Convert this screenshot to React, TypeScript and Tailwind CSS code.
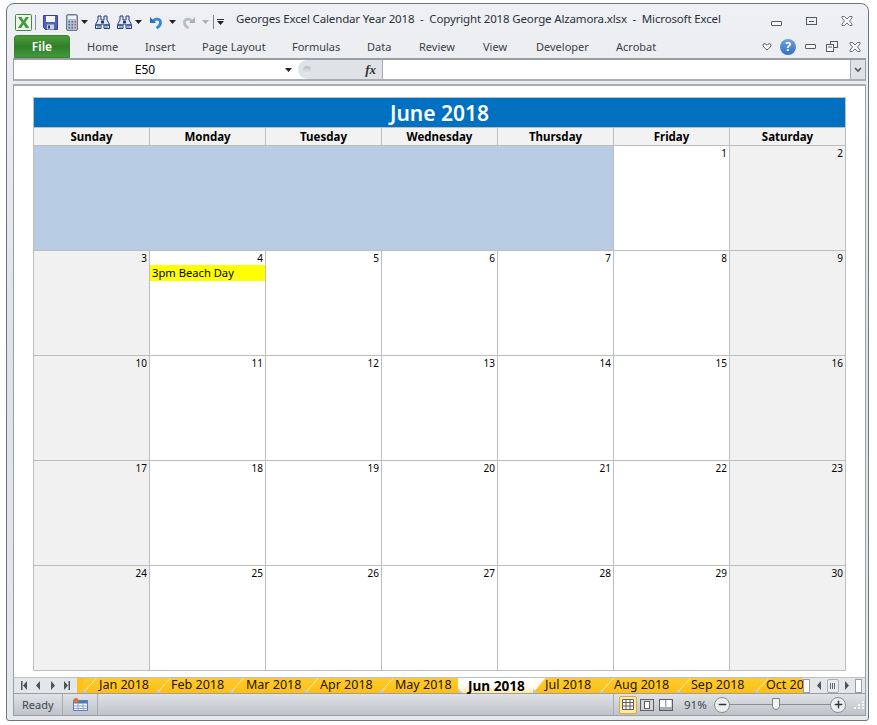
import React from "react";
import { Minus, Plus } from "lucide-react";

const days = ["Sunday", "Monday", "Tuesday", "Wednesday", "Thursday", "Friday", "Saturday"];
const menu = [
  ["Home", "w-[58px]"],
  ["Insert", "w-[57px]"],
  ["Page Layout", "w-[90px]"],
  ["Formulas", "w-[75px]"],
  ["Data", "w-[52px]"],
  ["Review", "w-[64px]"],
  ["View", "w-[53px]"],
  ["Developer", "w-[80px]"],
  ["Acrobat", "w-[60px]"],
];
const sheets = [
  ["Jan 2018", "w-[74px]", "ml-0"],
  ["Feb 2018", "w-[73px]", "ml-[-2px]"],
  ["Mar 2018", "w-[75px]", "ml-0"],
  ["Apr 2018", "w-[75px]", "ml-[-1px]"],
  ["May 2018", "w-[78px]", "ml-[-1px]"],
  ["Jun 2018", "w-[75px]", "ml-0"],
  ["Jul 2018", "w-[67px]", "ml-[-4px]"],
  ["Aug 2018", "w-[77px]", "ml-[-2px]"],
  ["Sep 2018", "w-[78px]", "ml-[-2px]"],
  ["Oct 2018", "w-[48px] overflow-x-clip", "ml-[-5px]"],
];
const rows = [
  [3, 4, 5, 6, 7, 8, 9],
  [10, 11, 12, 13, 14, 15, 16],
  [17, 18, 19, 20, 21, 22, 23],
  [24, 25, 26, 27, 28, 29, 30],
];

function ExcelIcon() {
  return (
    <svg width="17" height="17" viewBox="0 0 17 17">
      <rect x="0.5" y="0.5" width="16" height="16" rx="1" fill="#f1f4e4" stroke="#3f8a4a" />
      <path d="M3 3h3.500l2.200 3.400L10.700 3H14l-3.600 5.300L14.400 14h-3.600L8.500 10.400 6.200 14H2.800l3.900-5.600z" fill="#3f9a45" />
    </svg>
  );
}

function SaveIcon() {
  return (
    <svg width="15" height="15" viewBox="0 0 15 15">
      <path d="M0.5 0.5h14v14h-12l-2-2z" fill="#4f63c4" stroke="#34448f" />
      <rect x="3" y="1" width="9" height="6" fill="#f2f4fb" />
      <rect x="4" y="9.500" width="7" height="5" fill="#d0d2da" />
      <rect x="5" y="10.500" width="2" height="3" fill="#333f70" />
    </svg>
  );
}

function CalcIcon() {
  return (
    <svg width="12" height="17" viewBox="0 0 12 17">
      <rect x="0.5" y="0.5" width="11" height="16" rx="1.500" fill="#b4bccb" stroke="#6c7690" />
      <rect x="2" y="2" width="8" height="3" fill="#eef2f8" />
      <path d="M2.500 7h1.500v1.500H2.500zM5.500 7H7v1.500H5.500zM2.500 10H4v1.500H2.500zM5.500 10H7v1.500H5.500zM2.500 13H4v1.500H2.500zM5.500 13H7v1.500H5.500z" fill="#4a6cb0" />
      <path d="M8.500 7H10v1.500H8.500zM8.500 10H10v1.500H8.500zM8.500 13H10v1.500H8.500z" fill="#c8604a" />
    </svg>
  );
}

function BinocularsIcon() {
  return (
    <svg width="15" height="14" viewBox="0 0 15 14">
      <path d="M3 1h3v4h3V1h3v4l2.500 4.500V13.500H9V9H6v4.500H0.500V9.500L3 5z" fill="#dfe8f6" stroke="#22387f" />
      <path d="M1 10h4.500M9.500 10H14" stroke="#22387f" strokeWidth="1.500" />
      <path d="M2 11h3v2H2zM10 11h3v2h-3z" fill="#8fb0e0" />
      <path d="M6 6h3v2H6z" fill="#22387f" />
    </svg>
  );
}

function Caret({ color = "#222" }: { color?: string }) {
  return (
    <svg width="7" height="4" viewBox="0 0 7 4">
      <path d="M0 0h7L3.500 4z" fill={color} />
    </svg>
  );
}

function UndoIcon() {
  return (
    <svg width="13" height="14" viewBox="0 0 13 14">
      <path d="M3 6.500C5 3 10.500 3.500 10.500 7.500c0 2.500-2 4.500-4 5.500" fill="none" stroke="#3f86d8" strokeWidth="2.800" />
      <path d="M0 2l6 6H0z" fill="#2f6cc0" />
    </svg>
  );
}

function RedoIcon() {
  return (
    <svg width="13" height="14" viewBox="0 0 13 14">
      <path d="M10 6.500C8 3 2.500 3.500 2.500 7.500c0 2.500 2 4.500 4 5.500" fill="none" stroke="#b9bfc5" strokeWidth="2.800" />
      <path d="M13 2L7 8h6z" fill="#aab0b6" />
    </svg>
  );
}

function CloseIcon() {
  return (
    <svg width="12" height="10" viewBox="0 0 12 10">
      <path d="M1 0.500h2.500L6 3l2.500-2.500H11v1.500L8.500 5 11 8v1.500H8.500L6 7 3.500 9.500H1V8l2.500-3L1 2z" fill="#f4f5f7" stroke="#6d7278" />
    </svg>
  );
}

function MinBar() {
  return <div className="h-[5px] w-[11px] rounded-[1px] border border-[#555b63] bg-[#f5f6f8]" />;
}

function RestoreIcon() {
  return (
    <svg width="12" height="11" viewBox="0 0 12 11">
      <rect x="4.500" y="0.500" width="7" height="6" fill="#eef0f3" stroke="#555b63" />
      <rect x="0.500" y="3.500" width="7" height="7" fill="#f7f8fa" stroke="#555b63" />
      <path d="M2 6h4" stroke="#555b63" />
    </svg>
  );
}

function NavArrow({ d }: { d: string }) {
  return (
    <svg width="8" height="9" viewBox="0 0 8 9">
      <path d={d} fill="#4e545c" />
    </svg>
  );
}

// slanted left edge of a sheet tab, the upper left part belongs to the tab before it
function TabSlant({ afterActive }: { afterActive: boolean }) {
  return (
    <svg width="16" height="15" viewBox="0 0 16 15" className="shrink-0">
      {afterActive && <path d="M0 0h12.500L0 15z" fill="#fffdf2" />}
      {!afterActive && <path d="M0 15L13.500 0" stroke="#ffeab0" strokeWidth="1" />}
      <path d="M0 15V10.500L4.500 15z" fill="#c3c8ce" />
    </svg>
  );
}

function SheetTab({ label, width, shift, afterActive }: { label: string; width: string; shift: string; afterActive: boolean }) {
  if (label === "Jun 2018") {
    return (
      <div className={`relative flex h-[15px] shrink-0 items-center bg-gradient-to-b from-white via-white to-[#ffe89a] pl-[10px] font-bold text-black ${width}`}>
        <svg width="5" height="5" viewBox="0 0 5 5" className="absolute bottom-0 left-0">
          <path d="M0 5V0.500L4.500 5z" fill="#c3c8ce" />
        </svg>
        <span className="whitespace-nowrap text-[13.600px] leading-none">{label}</span>
      </div>
    );
  }
  return (
    <div className={`flex h-[15px] shrink-0 items-center bg-gradient-to-b from-[#ffcb2b] to-[#ffbf10] text-[#1c1405] ${width}`}>
      <TabSlant afterActive={afterActive} />
      <span className={`whitespace-nowrap text-[12.500px] leading-none ${shift}`}>{label}</span>
    </div>
  );
}

function Cell({ n, weekend, children }: { n: number; weekend: boolean; children?: React.ReactNode }) {
  return (
    <div className={`border-l border-t border-[#bdbdbd] first:border-l-0 ${weekend ? "bg-[#f1f1f1]" : "bg-white"}`}>
      <div className="h-[14px] pr-[2px] text-right text-[10px] leading-[14px] text-black">{n}</div>
      {children}
    </div>
  );
}

export default function App() {
  return (
    <div className="h-[725px] w-[877px] overflow-hidden bg-white pl-[6px] pt-[3px] font-['Noto_Sans',sans-serif]">
      <div className="flex h-[718px] w-[863px] flex-col rounded-t-[8px] rounded-b-[3px] border border-[#70757b] bg-gradient-to-b from-[#eef0f3] via-[#dfe2e6] to-[#e6e8eb] pb-[4px] pl-[6px] pr-[2px]">
        {/* title bar */}
        <div className="flex h-[31px] shrink-0 items-center pl-[2px] pt-[5px]">
          <ExcelIcon />
          <div className="ml-[3px] h-[15px] w-px bg-[#8a9097]" />
          <div className="ml-[7px]"><SaveIcon /></div>
          <div className="ml-[8px]"><CalcIcon /></div>
          <div className="ml-[3px]"><Caret /></div>
          <div className="ml-[7px]"><BinocularsIcon /></div>
          <div className="ml-[7px]"><BinocularsIcon /></div>
          <div className="ml-[3px]"><Caret /></div>
          <div className="ml-[8px]"><UndoIcon /></div>
          <div className="ml-[6px]"><Caret /></div>
          <div className="ml-[6px]"><RedoIcon /></div>
          <div className="ml-[7px]"><Caret color="#aab0b6" /></div>
          <div className="ml-[4px] h-[14px] w-px bg-[#7d8288]" />
          <div className="ml-[3px] flex flex-col gap-[1px]">
            <div className="h-px w-[7px] bg-[#333]" />
            <Caret />
          </div>
          <div className="mb-[6px] ml-[12px] whitespace-pre text-[11.500px] leading-none tracking-[-0.15px] text-[#2c3138]">
            Georges Excel Calendar Year 2018  -  Copyright 2018 George Alzamora.xlsx  -  Microsoft Excel
          </div>
          <div className="mb-[2px] ml-auto flex items-center gap-[24px] pr-[13px]">
            <div className="mt-[4px]"><MinBar /></div>
            <div className="flex h-[8px] w-[11px] items-center justify-center border border-[#555b63]">
              <div className="h-px w-[5px] bg-[#555b63]" />
            </div>
            <CloseIcon />
          </div>
        </div>

        {/* ribbon tabs */}
        <div className="flex h-[23px] shrink-0 items-center">
          <div className="ml-[1px] flex h-[23px] w-[56px] items-center justify-center rounded-t-[3px] border border-[#3f7d35] bg-gradient-to-b from-[#4d9c3a] via-[#2f7f2a] to-[#3f9a3c] text-[12px] font-semibold text-white">
            File
          </div>
          <div className="ml-[17px] flex">
            {menu.map(([label, w]) => (
              <div key={label} className={`${w} whitespace-nowrap text-[11px] leading-none text-[#3b3f46]`}>{label}</div>
            ))}
          </div>
          <div className="ml-auto flex items-center pr-[5px]">
            <svg width="10" height="8" viewBox="0 0 10 8" className="mr-[8px]">
              <path d="M1 1.500C2.500 0 4 1 5 2.200 6 1 7.500 0 9 1.500c0.500 1.500-2 4-4 5.500C3 5.500 0.500 3 1 1.500z" fill="#f5f6f8" stroke="#555b63" />
            </svg>
            <div className="flex h-[16px] w-[16px] items-center justify-center rounded-full bg-gradient-to-b from-[#6fa2e6] to-[#2f6fc4] text-[12px] font-bold leading-none text-white">?</div>
            <div className="ml-[9px]"><MinBar /></div>
            <div className="ml-[10px]"><RestoreIcon /></div>
            <div className="ml-[11px]"><CloseIcon /></div>
          </div>
        </div>

        {/* formula bar */}
        <div className="flex h-[23px] shrink-0 border-x border-y-2 border-x-[#9a9fa5] border-t-[#9a9fa5] border-b-[#a9adb2] bg-white">
          <div className="relative flex w-[284px] items-center justify-center text-[12px] text-black">
            <span className="ml-[-22px]">E50</span>
            <div className="absolute right-[6px] top-[8px]"><Caret /></div>
          </div>
          <div className="flex w-[85px] items-center rounded-l-[10px] border-r border-[#a9adb2] bg-[#dfe2e6] pl-[5px]">
            <div className="h-[8px] w-[8px] rounded-full bg-gradient-to-b from-[#b8bcc2] to-[#eceef0]" />
            <span className="ml-auto mr-[6px] font-['Liberation_Serif',serif] text-[13px] font-bold italic leading-none text-[#333]">fx</span>
          </div>
          <div className="flex-1" />
          <div className="flex w-[15px] items-center justify-center border-l border-[#a9adb2] bg-[#dfe2e6]">
            <svg width="8" height="6" viewBox="0 0 8 6"><path d="M1 1l3 3 3-3" fill="none" stroke="#555" strokeWidth="1.600" /></svg>
          </div>
        </div>

        {/* sheet */}
        <div className="mt-[3px] flex min-h-0 flex-1 flex-col border-x border-t-2 border-x-[#9a9fa5] border-t-[#a9adb2] bg-white px-[19px] pt-[11px]">
          <div className="w-[813px] border border-[#bdbdbd]">
            <div className="flex h-[29px] items-center justify-center bg-[#0070c0] pt-[1px] text-[21px] font-semibold leading-none text-white">June 2018</div>
            <div className="grid h-[18px] grid-cols-[115px_116px_116px_116px_116px_116px_116px] bg-[#f2f2f2]">
              {days.map((d) => (
                <div key={d} className="border-l border-t border-[#bdbdbd] text-center text-[11.500px] font-bold leading-[18px] text-black first:border-l-0">{d}</div>
              ))}
            </div>
            <div className="grid h-[105px] grid-cols-[115px_116px_116px_116px_116px_116px_116px]">
              <div className="col-span-5 border-t border-[#bdbdbd] bg-[#b8cce4]" />
              <Cell n={1} weekend={false} />
              <Cell n={2} weekend />
            </div>
            {rows.map((row) => (
              <div key={row[0]} className="grid h-[105px] grid-cols-[115px_116px_116px_116px_116px_116px_116px]">
                {row.map((n, j) => (
                  <Cell key={n} n={n} weekend={j === 0 || j === 6}>
                    {n === 4 && <div className="h-[16px] bg-[#ffff00] pl-[2px] text-[11.200px] leading-[16px] text-black">3pm Beach Day</div>}
                  </Cell>
                ))}
              </div>
            ))}
          </div>
        </div>

        {/* sheet tabs */}
        <div className="flex h-[17px] shrink-0 items-center border-x border-b border-t border-x-[#9a9fa5] border-b-[#9a9fa5] border-t-[#bcc0c5] bg-[#e4e7ea]">
          <div className="flex w-[63px] shrink-0 items-center justify-between px-[6px]">
            <NavArrow d="M1 0h1.500v9H1zM7 0v9L3 4.500z" />
            <NavArrow d="M6 0v9L2 4.500z" />
            <NavArrow d="M2 0v9l4-4.500z" />
            <NavArrow d="M7 0h-1.500v9H7zM1 0v9l4-4.500z" />
          </div>
          <div className="flex h-[15px] w-[726px] shrink-0 bg-[#ffc01a] pl-[6px]">
            {sheets.map(([label, w, shift], i) => (
              <SheetTab key={label} label={label} width={w} shift={shift} afterActive={i > 0 && sheets[i - 1][0] === "Jun 2018"} />
            ))}
          </div>
          <div className="flex flex-1 items-center">
            <div className="h-[14px] w-[7px] border border-[#9a9fa5] bg-white" />
            <div className="ml-[5px]"><NavArrow d="M6 0v9L2 4.500z" /></div>
            <div className="ml-[4px] flex h-[14px] w-[12px] items-center justify-center rounded-[2px] border border-[#a9adb2] bg-[#e9ebee]">
              <div className="h-[6px] w-[6px] bg-[repeating-linear-gradient(90deg,#666_0,#666_1px,transparent_1px,transparent_2px)]" />
            </div>
            <div className="ml-[4px]"><NavArrow d="M2 0v9l4-4.500z" /></div>
            <div className="ml-[4px] h-[14px] w-[7px] border border-[#9a9fa5] bg-white" />
          </div>
        </div>

        {/* status bar */}
        <div className="flex h-[22px] shrink-0 items-center border-x border-b border-[#9a9fa5] bg-gradient-to-b from-[#dfe2e6] to-[#bfc3c9] text-[11px] leading-none text-[#3f454c]">
          <div className="flex h-full w-[49px] items-center border-r border-[#a9adb2] pl-[8px]">Ready</div>
          <div className="flex h-full w-[35px] items-center justify-center border-r border-[#a9adb2]">
            <svg width="15" height="13" viewBox="0 0 15 13">
              <rect x="0.500" y="2.500" width="14" height="10" fill="#f4f7fc" stroke="#5a7fb5" />
              <rect x="1" y="3" width="13" height="2.500" fill="#4a78b8" />
              <path d="M1 8h13M1 10.500h13M5 5.500v7M10 5.500v7" stroke="#8aa6cf" />
              <circle cx="3" cy="2.500" r="2.500" fill="#e0703a" />
            </svg>
          </div>
          <div className="ml-auto flex h-full items-center">
            <div className="h-full w-px bg-[#a9adb2]" />
            <div className="ml-[5px] flex h-[18px] w-[18px] items-center justify-center rounded-[2px] border border-[#d9a93f] bg-[#fde9a8]">
              <svg width="12" height="11" viewBox="0 0 12 11"><path d="M0.500 0.500h11v10h-11zM0.500 3.500h11M0.500 7h11M4 0.500v10M8 0.500v10" fill="#fff8e0" stroke="#5a5f66" /></svg>
            </div>
            <div className="ml-[3px] flex h-[12px] w-[14px] items-center justify-center border border-[#5a5f66] bg-[#d3d6da]">
              <div className="h-[8px] w-[6px] border border-[#5a5f66] bg-white" />
            </div>
            <svg width="14" height="12" viewBox="0 0 14 12" className="ml-[5px]">
              <rect x="0.500" y="0.500" width="13" height="11" fill="#a9adb3" stroke="#5a5f66" />
              <rect x="1" y="1" width="5" height="7" fill="#fff" />
              <rect x="7.500" y="1" width="5" height="7" fill="#fff" />
            </svg>
            <div className="ml-[11px] w-[30px] text-[11.500px]">91%</div>
            <div className="flex h-[16px] w-[16px] items-center justify-center rounded-full border border-[#8b9096] bg-[#eceef0]">
              <Minus size={11} strokeWidth={3} color="#333" />
            </div>
            <div className="relative h-px w-[100px] bg-[#8b9096]">
              <div className="absolute left-[42px] top-[-6px] h-[12px] w-[8px] rounded-b-[4px] border border-[#7d8288] bg-[#f1f2f4]" />
            </div>
            <div className="flex h-[16px] w-[16px] items-center justify-center rounded-full border border-[#8b9096] bg-[#eceef0]">
              <Plus size={11} strokeWidth={3} color="#333" />
            </div>
            <div className="ml-[8px] grid h-[10px] w-[11px] grid-cols-3 gap-[1px] pt-[1px]">
              <div /><div /><div className="h-[2px] w-[2px] bg-[#f4f5f7]" />
              <div /><div className="h-[2px] w-[2px] bg-[#f4f5f7]" /><div className="h-[2px] w-[2px] bg-[#f4f5f7]" />
              <div className="h-[2px] w-[2px] bg-[#f4f5f7]" /><div className="h-[2px] w-[2px] bg-[#f4f5f7]" /><div className="h-[2px] w-[2px] bg-[#f4f5f7]" />
            </div>
          </div>
        </div>
      </div>
    </div>
  );
}
